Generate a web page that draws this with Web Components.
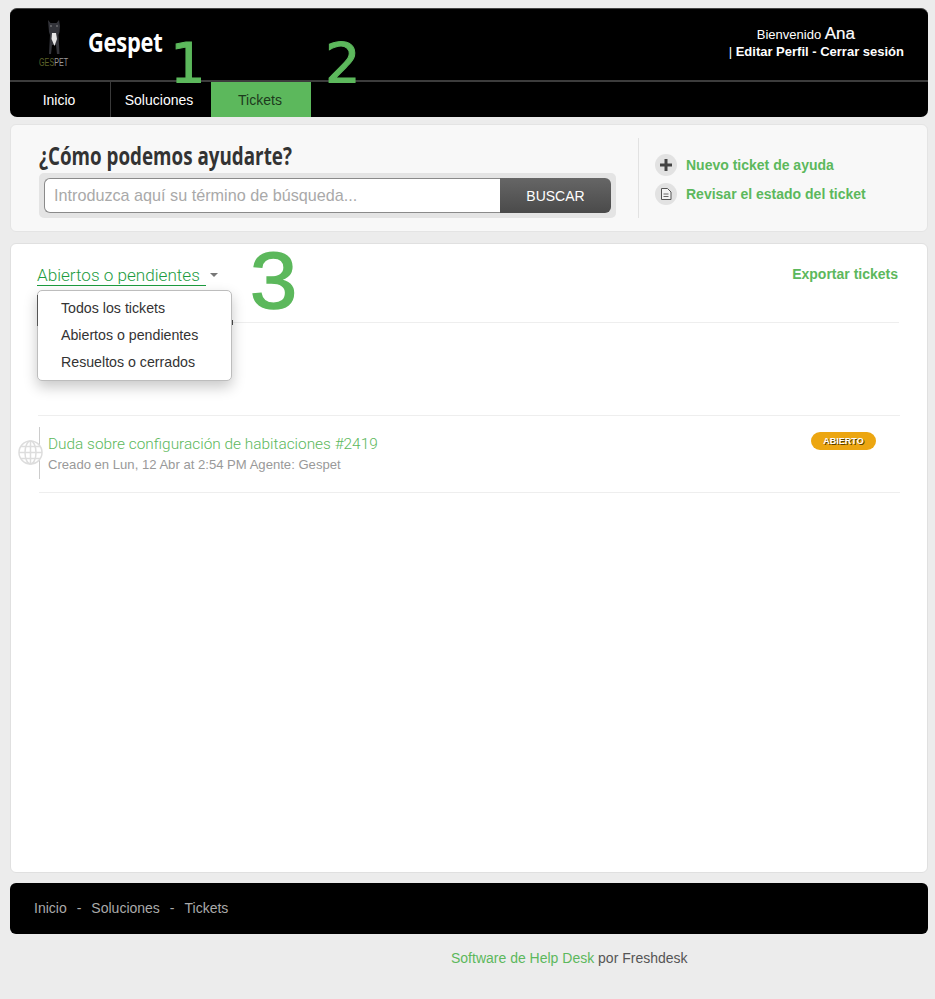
<!DOCTYPE html>
<html lang="es"><head><meta charset="utf-8"><title>Gespet</title>
<style>
html,body{margin:0;padding:0;background:#ececec;}
body{font-family:"Liberation Sans",Arial,sans-serif;width:935px;height:999px;overflow:hidden;}
</style></head><body>
<gp-app></gp-app>
<template id="t-app"><style>
:host{display:flex;flex-direction:column;padding:8px 7px 0 10px;box-sizing:border-box;width:935px;height:999px;font-family:"Liberation Sans",Arial,sans-serif;position:relative}
gp-header{margin-bottom:7px}
gp-search{margin-bottom:11px}
gp-tickets{margin-bottom:10px}
.num{position:absolute;color:#5cb85c;line-height:1}
.n1{left:170px;top:35px;font:56px/1 "DejaVu Sans",sans-serif;-webkit-text-stroke:1px #5cb85c}
.n2{left:325px;top:35px;font:56px/1 "DejaVu Sans",sans-serif;-webkit-text-stroke:1px #5cb85c}
.n3{left:250px;top:241px;font:80px/1 "Liberation Sans",sans-serif;-webkit-text-stroke:1.5px #5cb85c;transform:scaleX(1.06);transform-origin:left}
</style>
<gp-header></gp-header><gp-search></gp-search><gp-tickets></gp-tickets><gp-footer></gp-footer>
<span class="num n1">1</span><span class="num n2">2</span><span class="num n3">3</span>
</template>

<template id="t-header"><style>
:host{display:block;background:#000;border-radius:7px;border-top:1px solid #444;height:109px;box-sizing:border-box;color:#fff}
.top{height:71px;border-bottom:2px solid #3c3c3c;display:flex;align-items:flex-start;box-sizing:content-box}
.logo{width:32px;height:52px;margin:8px 0 0 28px;flex:none}
.brand{font:700 27px/1 "Open Sans",sans-serif;margin:19px 0 0 18px;transform:scaleX(.81);transform-origin:left;letter-spacing:-.3px}
.user{margin-left:auto;margin-right:24px;margin-top:17px;text-align:right;font-size:13px;line-height:16px}
.user .w{padding-right:49px;display:block;margin-bottom:1px}
.user .ana{font-size:17px;-webkit-text-stroke:.2px #fff}
.user b{font-size:13px}
nav{display:flex;height:35px}
a{display:flex;align-items:center;justify-content:center;font-size:14px;color:#fff;box-sizing:border-box}
.i{width:101px;border-right:1px solid #3a3a3a;padding-right:2px}
.s{width:100px;padding-right:4px}
.t{width:100px;background:#5cb85c;color:#1c3a1c;padding-right:2px}
</style>
<div class="top">
<svg class="logo" viewBox="0 0 32 52" aria-hidden="true">
<path d="M10 3l2.500 3h6L21 3l1 6-.5 6-1 3 .5 9 .5 10h-2.500l-1-9h-4l-1 9H11l.5-10 .5-9-1-3-.5-6z" fill="#33343a"/>
<path d="M12 9h2M18 9h2" stroke="#8a8a8a" stroke-width="1.200"/>
<path d="M14 16h4l1 6-2.500 7-3-7z" fill="#e6e6e6"/>
<text transform="translate(1 49) scale(.72 1)" font-family="Liberation Sans" font-size="10" fill="#5c6128">GES<tspan fill="#999">PET</tspan></text>
</svg>
<div class="brand">Gespet</div>
<div class="user"><span class="w">Bienvenido <span class="ana">Ana</span></span><b><span style="font-weight:400">|</span> Editar Perfil - Cerrar sesión</b></div>
</div>
<nav><a class="i">Inicio</a><a class="s">Soluciones</a><a class="t">Tickets</a></nav>
</template>

<template id="t-search"><style>
:host{display:flex;background:#f8f8f8;border:1px solid #e4e4e4;border-radius:6px;height:108px;box-sizing:border-box;padding:13px 0 13px 28px}
.l{width:578px;flex:none}
h1{font:700 25px/1 "Open Sans",sans-serif;color:#333;margin:5px 0 0;transform:scaleX(.752);transform-origin:left;white-space:nowrap;height:27px}
.box{margin-top:3px;background:#e4e4e4;border-radius:5px;padding:5px;display:flex;height:35px;box-sizing:content-box;width:567px}
.in{flex:1;background:#fff;border:1px solid #8a8a8a;border-right:none;border-radius:6px 0 0 6px;color:#a9a9a9;font-size:16.200px;display:flex;align-items:center;padding-left:9px;box-sizing:border-box}
.btn{width:111px;background:linear-gradient(#666,#4a4a4a);border-radius:0 6px 6px 0;color:#fff;font-size:14px;display:flex;align-items:center;justify-content:center}
.r{margin-left:21px;border-left:1px solid #e2e2e2;padding:16px 0 0 16px;display:flex;flex-direction:column;gap:7px}
.row{display:flex;align-items:center;gap:9px;color:#5cb85c;font-weight:700;font-size:14px;height:22px}
.ic{width:22px;height:22px;flex:none}
</style>
<div class="l"><h1>¿Cómo podemos ayudarte?</h1>
<div class="box"><div class="in">Introduzca aquí su término de búsqueda...</div><div class="btn">BUSCAR</div></div></div>
<div class="r">
<div class="row"><svg class="ic" viewBox="0 0 22 22" aria-hidden="true"><circle cx="11" cy="11" r="11" fill="#e2e2e2"/><path d="M11 5v12M5 11h12" stroke="#444" stroke-width="3"/></svg>Nuevo ticket de ayuda</div>
<div class="row"><svg class="ic" viewBox="0 0 22 22" aria-hidden="true"><circle cx="11" cy="11" r="11" fill="#e2e2e2"/><path d="M6.500 5.500h6l3.500 3.500v7.500h-9.500z" fill="#f4f4f4" stroke="#555" stroke-width="1" stroke-linejoin="round"/><path d="M8.500 11h5M8.500 13.500h5" stroke="#666"/></svg>Revisar el estado del ticket</div>
</div>
</template>

<template id="t-tickets"><style>
:host{display:block;position:relative;background:#fff;border:1px solid #e0e0e0;border-radius:6px;height:630px;box-sizing:border-box;color:#333}
.head{display:flex;justify-content:space-between;height:79px;box-sizing:border-box;margin:0 28px 0 26px;padding-top:21px;position:relative}
.head::after{content:"";position:absolute;left:2px;right:0;bottom:0;border-bottom:1px solid #eee}
.f{display:inline-flex;align-items:flex-start;height:20px;color:#1c9b3e;font:300 17.100px/20px Roboto,sans-serif;position:relative}
.f span{border-bottom:1px solid #1c9b3e;padding-right:6px}
.f i{width:0;height:0;border:4px solid transparent;border-top-color:#777;border-bottom:0;margin:8px 0 0 4px}
.exp{color:#5cb85c;font-weight:700;font-size:14px;margin-top:1px;margin-right:1px}
gp-menu{position:absolute;left:26px;top:46px}
.gap{height:93px;margin:0 27px;border-bottom:1px solid #eee;box-sizing:border-box}
.t{position:relative;margin:0 27px 0 28px;height:77px;border-bottom:1px solid #eee;box-sizing:border-box;padding:18px 0 0 9px}
.t::before{content:"";position:absolute;left:0;top:11px;height:52px;border-left:1px solid #ccc}
.g{position:absolute;left:-21px;top:24px;width:25px;height:25px}
.ti{color:#5cb85c;font:300 15.400px/20px Roboto,sans-serif}
.me{color:#999;font-size:13.100px;line-height:16px;margin-top:3px}
.bad{position:absolute;right:24px;top:16px;width:65px;height:18px;border-radius:9px;background:#eca611;color:#fff;font-size:9px;font-weight:700;text-shadow:1px 1px 0 #5a4000;display:flex;align-items:center;justify-content:center}
</style>
<div class="head"><div class="f"><span>Abiertos o pendientes</span><i></i></div><div class="exp">Exportar tickets</div></div>
<gp-menu></gp-menu>
<div class="gap"></div>
<div class="t">
<svg class="g" viewBox="0 0 25 25" aria-hidden="true"><g fill="#fff" stroke="#ddd" stroke-width="1.500"><circle cx="12.500" cy="12.500" r="11.500"/><ellipse cx="12.500" cy="12.500" rx="5.500" ry="11.500"/><path d="M12.500 1v23M1 12.500h23M3 6.500h19M3 18.500h19" fill="none"/></g></svg>
<div class="ti">Duda sobre configuración de habitaciones #2419</div>
<div class="me">Creado en Lun, 12 Abr at 2:54 PM Agente: Gespet</div>
<div class="bad">ABIERTO</div>
</div>
</template>

<template id="t-menu"><style>
:host{display:block;width:195px;height:91px;background:#fff;border:1px solid #bdbdbd;border-radius:5px;box-sizing:border-box;box-shadow:0 6px 14px rgba(0,0,0,.22);padding:4px 0 0 23px;font-size:14.200px;line-height:27px;color:#333;position:relative}
:host::before{content:"";position:absolute;left:-1px;top:4px;height:31px;border-left:1px solid #555}
:host::after{content:"";position:absolute;right:-2px;top:29px;height:5px;border-left:1px solid #444}
div{white-space:nowrap}
</style><div>Todos los tickets</div><div>Abiertos o pendientes</div><div>Resueltos o cerrados</div></template>

<template id="t-footer"><style>
:host{display:block;color:#999}
.bar{background:#000;border-radius:6px;height:51px;display:flex;align-items:center;padding:0 0 1px 24px;box-sizing:border-box;font-size:14px;color:#aaa;gap:10px}
.c{margin:15px 0 0 441px;font-size:14px;line-height:18px;color:#555;white-space:nowrap}
.c a{color:#5cb85c}
</style>
<div class="bar"><span>Inicio</span><span>-</span><span>Soluciones</span><span>-</span><span>Tickets</span></div>
<div class="c"><a>Software de Help Desk</a> por Freshdesk</div>
</template>

<script>
const reg=(tag,id)=>customElements.define(tag,class extends HTMLElement{
  constructor(){super();this.attachShadow({mode:"open"}).appendChild(document.getElementById(id).content.cloneNode(true));}
});
reg("gp-menu","t-menu");reg("gp-header","t-header");reg("gp-search","t-search");
reg("gp-tickets","t-tickets");reg("gp-footer","t-footer");reg("gp-app","t-app");
</script>
</body></html>
